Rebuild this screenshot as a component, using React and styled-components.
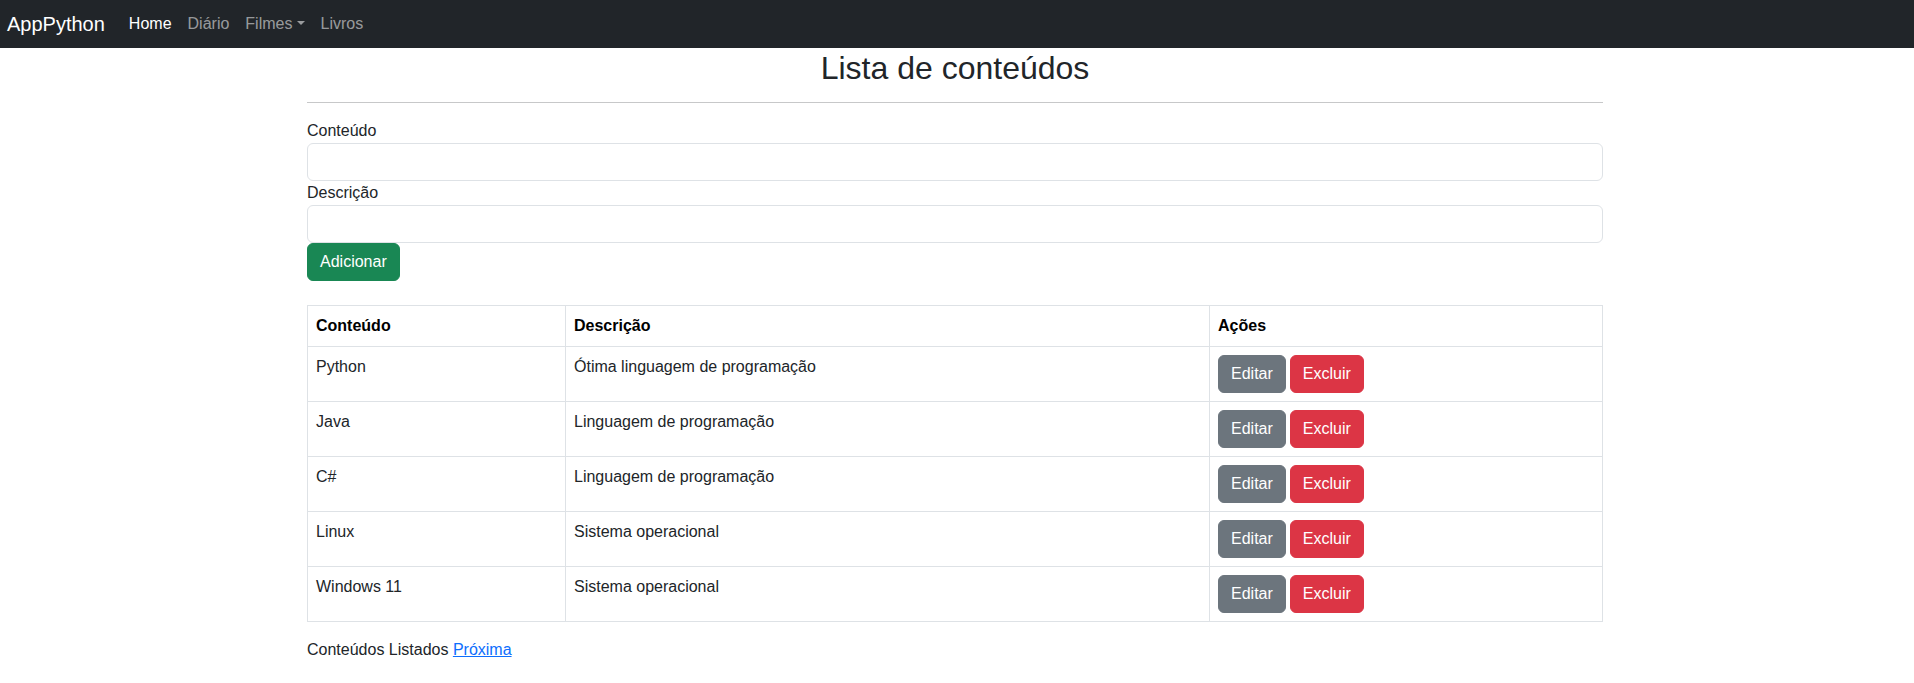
import React from 'react';
import styled, { createGlobalStyle } from 'styled-components';

const GlobalStyle = createGlobalStyle`
  *, *::before, *::after {
    box-sizing: border-box;
  }

  body {
    margin: 0;
    font-family: "Liberation Sans", Arial, sans-serif;
    font-size: 16px;
    line-height: 1.5;
    color: #212529;
    background: #fff;
  }
`;

const Navbar = styled.nav`
  display: flex;
  align-items: center;
  height: 48px;
  padding: 4px 12px 4px 7px;
  background: #212529;
`;

const Brand = styled.a`
  font-size: 20px;
  line-height: 30px;
  padding: 5px 0;
  margin-right: 16px;
  color: #fff;
  text-decoration: none;
`;

const NavList = styled.div`
  display: flex;
  align-items: center;
`;

const NavLink = styled.a`
  padding: 8px;
  line-height: 24px;
  color: ${p => (p.$active ? '#fff' : 'rgba(255, 255, 255, 0.55)')};
  text-decoration: none;
`;

const Caret = styled.span`
  display: inline-block;
  margin-left: 0.255em;
  vertical-align: 0.255em;
  border-top: 0.3em solid;
  border-right: 0.3em solid transparent;
  border-left: 0.3em solid transparent;
  border-bottom: 0;
`;

const Container = styled.main`
  max-width: 1320px;
  margin: 0 auto;
  padding: 0 14px 0 10px;
`;

const Title = styled.h2`
  margin: 3px 0 8px;
  font-size: 32px;
  font-weight: 500;
  line-height: 35px;
  text-align: center;
`;

const Rule = styled.hr`
  margin: 16px 0;
  border: 0;
  border-top: 1px solid rgba(33, 37, 41, 0.25);
`;

const Form = styled.form`
  display: flex;
  flex-direction: column;
  align-items: flex-start;
  margin-bottom: 24px;
`;

const Label = styled.label`
  line-height: 24px;
`;

const Input = styled.input`
  display: block;
  width: 100%;
  height: 38px;
  padding: 6px 12px;
  font: inherit;
  border: 1px solid #dee2e6;
  border-radius: 6px;
  background: #fff;
`;

const colors = {
  success: '#198754',
  secondary: '#6c757d',
  danger: '#dc3545',
};

const Button = styled.button`
  display: inline-block;
  padding: 6px 12px;
  font-family: inherit;
  font-size: 16px;
  line-height: 24px;
  color: #fff;
  background: ${p => colors[p.$variant]};
  border: 1px solid ${p => colors[p.$variant]};
  border-radius: 6px;
  cursor: pointer;
`;

const Table = styled.table`
  width: 100%;
  margin-bottom: 16px;
  border-collapse: collapse;
  border: 1px solid #dee2e6;
`;

const Col = styled.col`
  width: ${p => (p.$w ? `${p.$w}px` : 'auto')};
`;

const Th = styled.th`
  padding: 8px;
  text-align: left;
  font-weight: 700;
  color: #000;
  border: 1px solid #dee2e6;
`;

const Td = styled.td`
  padding: 8px;
  vertical-align: top;
  border: 1px solid #dee2e6;
`;

const Actions = styled.div`
  display: flex;
  gap: 4px;
`;

const Footer = styled.p`
  margin: 0;
`;

const Link = styled.a`
  color: #0d6efd;
  text-decoration: underline;
`;

const conteudos = [
  { nome: 'Python', descricao: 'Ótima linguagem de programação' },
  { nome: 'Java', descricao: 'Linguagem de programação' },
  { nome: 'C#', descricao: 'Linguagem de programação' },
  { nome: 'Linux', descricao: 'Sistema operacional' },
  { nome: 'Windows 11', descricao: 'Sistema operacional' },
];

export default function App() {
  return (
    <>
      <GlobalStyle />
      <Navbar>
        <Brand href="#">AppPython</Brand>
        <NavList>
          <NavLink href="#" $active>Home</NavLink>
          <NavLink href="#">Diário</NavLink>
          <NavLink href="#">Filmes<Caret /></NavLink>
          <NavLink href="#">Livros</NavLink>
        </NavList>
      </Navbar>

      <Container>
        <Title>Lista de conteúdos</Title>
        <Rule />

        <Form onSubmit={e => e.preventDefault()}>
          <Label htmlFor="conteudo">Conteúdo</Label>
          <Input id="conteudo" type="text" />
          <Label htmlFor="descricao">Descrição</Label>
          <Input id="descricao" type="text" />
          <Button type="submit" $variant="success">Adicionar</Button>
        </Form>

        <Table>
          <colgroup>
            <Col $w={258} />
            <Col $w={644} />
            <Col />
          </colgroup>
          <thead>
            <tr>
              <Th>Conteúdo</Th>
              <Th>Descrição</Th>
              <Th>Ações</Th>
            </tr>
          </thead>
          <tbody>
            {conteudos.map(c => (
              <tr key={c.nome}>
                <Td>{c.nome}</Td>
                <Td>{c.descricao}</Td>
                <Td>
                  <Actions>
                    <Button $variant="secondary">Editar</Button>
                    <Button $variant="danger">Excluir</Button>
                  </Actions>
                </Td>
              </tr>
            ))}
          </tbody>
        </Table>

        <Footer>
          Conteúdos Listados <Link href="#">Próxima</Link>
        </Footer>
      </Container>
    </>
  );
}
